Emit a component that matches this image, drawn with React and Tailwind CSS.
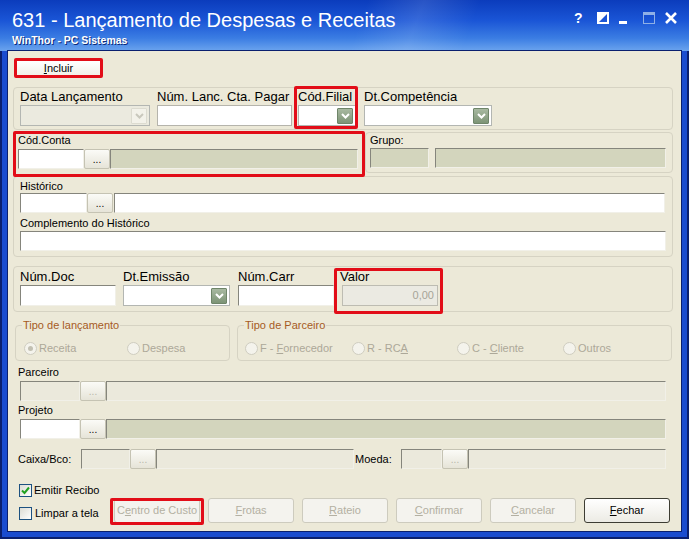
import React from 'react';

const sunkenBorder = 'border border-t-[#85857c] border-l-[#85857c] border-b-[#f1f0e8] border-r-[#f1f0e8]';

const Combo = ({ w, disabled }) => (
    <div className={`${w} h-[21px] flex items-center justify-end pr-[2px] border border-[#b3b6b2] ${disabled ? 'bg-[#ebeadf]' : 'bg-white'}`}>
        <div className={`w-[16px] h-[16px] flex items-center justify-center rounded-[1px] ${disabled ? 'bg-[#f3f2ea] border border-[#dcdbd0]' : 'bg-[linear-gradient(180deg,#a8b9a1,#7d9476)] border border-[#6f8569]'}`}>
            <svg width="9" height="6" viewBox="0 0 9 6">
                <path d="M1 1 L4.5 4.5 L8 1" stroke={disabled ? '#c9c8bd' : '#ffffff'} strokeWidth="2" fill="none" />
            </svg>
        </div>
    </div>
);

const Dots = ({ disabled }) => (
    <div className={`w-[26px] h-full flex items-end justify-center pb-[3px] border border-[#c5c3b3] rounded-[2px] bg-[linear-gradient(180deg,#fbfbf7,#e6e4d8)] text-[10px] leading-none ${disabled ? 'text-[#b8b6aa]' : 'text-black'}`}>...</div>
);

const Radio = ({ label, checked, w }) => (
    <div className={`${w} flex items-center`}>
        <div className="w-[13px] h-[13px] rounded-full border border-[#cfcdc0] bg-[#f4f3ec] flex items-center justify-center">
            {checked && <div className="w-[5px] h-[5px] rounded-full bg-[#c2c0b2]" />}
        </div>
        <span className="ml-[2px] text-[11px] text-[#aca899]">{label}</span>
    </div>
);

const Button = ({ children, enabled }) => (
    <div className={`w-[86px] h-[25px] flex items-center justify-center rounded-[3px] text-[11px] ${enabled ? 'border border-[#3d3d33] bg-[linear-gradient(180deg,#ffffff,#ecebe4)] text-black' : 'border border-[#cdcbbe] bg-[#f4f3ee] text-[#b3b0a2]'}`}>
        {children}
    </div>
);

const RedBox = ({ className }) => (
    <div className={`absolute border-[3px] border-[#e20d18] rounded-[2px] pointer-events-none ${className}`} />
);

const App = () => {
    return (
        <div className="relative w-[689px] h-[539px] overflow-hidden bg-[#1a4ccf] shadow-[inset_0_0_0_2px_#0a1f6e] font-['Liberation_Sans',Arial,sans-serif] text-black">
            {/* title bar */}
            <div className="h-[51px] flex justify-between bg-[linear-gradient(110deg,transparent_52%,rgba(255,255,255,0.12)_60%,transparent_68%),linear-gradient(180deg,#0b3cbc_0%,#1a55d6_40%,#3b7de3_75%,#6ba4ee_100%)]">
                <div className="pl-[12px] pt-[8px] text-white">
                    <div className="text-[20px] leading-[24px]">631 - Lançamento de Despesas e Receitas</div>
                    <div className="mt-[2px] text-[10.5px] leading-[13px] font-bold [text-shadow:1px_1px_0_#0a2a7a]">WinThor - PC Sistemas</div>
                </div>
                <div className="flex items-start pt-[11px] pr-[11px] text-white">
                    <div className="w-[9px] text-[14px] leading-[14px] font-bold">?</div>
                    <svg className="ml-[14px] mt-[1px]" width="12" height="12" viewBox="0 0 12 12">
                        <rect x="1" y="1" width="10" height="10" fill="none" stroke="#fff" strokeWidth="2" />
                        <polygon points="1,1 11,1 1,11" fill="#fff" />
                    </svg>
                    <div className="ml-[10px] mt-[10px] w-[8px] h-[3px] bg-white" />
                    <svg className="ml-[16px]" width="12" height="13" viewBox="0 0 12 13">
                        <rect x="0.5" y="1.5" width="11" height="11" fill="none" stroke="#8fb0e6" strokeWidth="1" />
                        <rect x="0" y="1" width="12" height="3" fill="#8fb0e6" />
                    </svg>
                    <svg className="ml-[9px]" width="14" height="14" viewBox="0 0 14 14">
                        <path d="M2 2 L12 12 M12 2 L2 12" stroke="#fff" strokeWidth="2.6" />
                    </svg>
                </div>
            </div>

            {/* client area */}
            <div className="mx-[8px] h-[480px] bg-[#ece9d8] ring-1 ring-[#0a1f6e] flex flex-col">
                <div className="ml-[9px] mt-[10px] w-[83px] h-[15px] flex items-center justify-center bg-[linear-gradient(180deg,#ffffff,#f1f0e7)] text-[11px] leading-none">
                    <span><u>I</u>ncluir</span>
                </div>

                {/* group 1 */}
                <div className="mt-[11px] ml-[5px] w-[660px] h-[43px] border border-[#d6d3c3] rounded-[4px] flex pl-[6px]">
                    <div className="w-[130px]">
                        <div className="text-[13px] leading-[17px]">Data Lançamento</div>
                        <Combo w="w-[130px]" disabled />
                    </div>
                    <div className="ml-[7px] w-[135px]">
                        <div className="text-[13px] leading-[17px] whitespace-nowrap">Núm. Lanc. Cta. Pagar</div>
                        <div className="h-[21px] border border-[#b5b4ac] bg-white" />
                    </div>
                    <div className="ml-[6px] w-[58px]">
                        <div className="text-[13px] leading-[17px]">Cód.Filial</div>
                        <Combo w="w-[58px]" />
                    </div>
                    <div className="ml-[8px] w-[128px]">
                        <div className="text-[13px] leading-[17px] whitespace-nowrap">Dt.Competência</div>
                        <Combo w="w-[128px]" />
                    </div>
                </div>

                {/* row 2 */}
                <div className="mt-[1px] ml-[5px] flex items-start">
                    <div className="w-[351px] h-[45px] border border-[#d6d3c3] rounded-[4px] pl-[4px]">
                        <div className="mt-[1px] text-[11px] leading-[14px]">Cód.Conta</div>
                        <div className="mt-[2px] h-[20px] flex">
                            <div className={`w-[66px] h-full bg-white ${sunkenBorder}`} />
                            <Dots />
                            <div className={`w-[248px] h-full bg-[#d3d5bd] ${sunkenBorder}`} />
                        </div>
                    </div>
                    <div className="ml-[1px] mt-[1px] w-[308px] h-[41px] border border-[#d6d3c3] rounded-[4px] pl-[4px]">
                        <div className="text-[11px] leading-[14px]">Grupo:</div>
                        <div className="mt-[1px] h-[20px] flex">
                            <div className={`w-[59px] h-full bg-[#d3d5bd] ${sunkenBorder}`} />
                            <div className={`ml-[6px] w-[231px] h-full bg-[#d3d5bd] ${sunkenBorder}`} />
                        </div>
                    </div>
                </div>

                {/* histórico */}
                <div className="mt-[0px] ml-[5px] w-[660px] h-[81px] border border-[#d6d3c3] rounded-[4px] pl-[6px]">
                    <div className="mt-[2px] text-[11px] leading-[14px]">Histórico</div>
                    <div className="h-[20px] flex">
                        <div className={`w-[67px] h-full bg-white ${sunkenBorder}`} />
                        <Dots />
                        <div className={`ml-[1px] w-[551px] h-full bg-white ${sunkenBorder}`} />
                    </div>
                    <div className="mt-[3px] text-[11px] leading-[14px]">Complemento do Histórico</div>
                    <div className={`mt-[1px] w-[646px] h-[20px] bg-white ${sunkenBorder}`} />
                </div>

                {/* group 4 */}
                <div className="mt-[9px] ml-[5px] w-[660px] h-[46px] border border-[#d6d3c3] rounded-[4px] flex pl-[6px]">
                    <div className="w-[96px]">
                        <div className="mt-[1px] text-[13px] leading-[17px]">Núm.Doc</div>
                        <div className={`h-[21px] bg-white ${sunkenBorder}`} />
                    </div>
                    <div className="ml-[7px] w-[107px]">
                        <div className="mt-[1px] text-[13px] leading-[17px]">Dt.Emissão</div>
                        <Combo w="w-[107px]" />
                    </div>
                    <div className="ml-[8px] w-[96px]">
                        <div className="mt-[1px] text-[13px] leading-[17px]">Núm.Carr</div>
                        <div className={`h-[21px] bg-white ${sunkenBorder}`} />
                    </div>
                    <div className="ml-[8px] w-[96px]">
                        <div className="mt-[1px] -ml-[2px] text-[13px] leading-[17px]">Valor</div>
                        <div className="h-[21px] border border-[#bdbcb2] bg-[#ebeae2] flex items-center justify-end pr-[3px] text-[11px] text-[#a6a498]">0,00</div>
                    </div>
                </div>

                {/* tipo */}
                <div className="mt-[7px] flex">
                    <fieldset className="ml-[7px] w-[215px] h-[42px] border border-[#d6d3c3] rounded-[4px]">
                        <legend className="ml-[6px] px-[1px] text-[11px] leading-[13px] text-[#a65b1f]">Tipo de lançamento</legend>
                        <div className="mt-[9px] h-[14px] pl-[8px] flex">
                            <Radio w="w-[103px]" label="Receita" checked />
                            <Radio w="w-[100px]" label="Despesa" />
                        </div>
                    </fieldset>
                    <fieldset className="ml-[7px] w-[435px] h-[42px] border border-[#d6d3c3] rounded-[4px]">
                        <legend className="ml-[6px] px-[1px] text-[11px] leading-[13px] text-[#a65b1f]">Tipo de Parceiro</legend>
                        <div className="mt-[9px] h-[14px] pl-[7px] flex">
                            <Radio w="w-[107px]" label={<span>F - <u>F</u>ornecedor</span>} />
                            <Radio w="w-[105px]" label={<span>R - RC<u>A</u></span>} />
                            <Radio w="w-[106px]" label={<span>C - <u>C</u>liente</span>} />
                            <Radio w="w-[100px]" label="Outros" />
                        </div>
                    </fieldset>
                </div>

                {/* parceiro / projeto / caixa */}
                <div className="pl-[10px]">
                    <div className="mt-[4px] text-[11px] leading-[14px]">Parceiro</div>
                    <div className="mt-[2px] ml-[2px] h-[20px] flex">
                        <div className={`w-[60px] h-full bg-[#ebe9dc] ${sunkenBorder}`} />
                        <Dots disabled />
                        <div className={`w-[560px] h-full bg-[#ebe9dc] ${sunkenBorder}`} />
                    </div>
                    <div className="mt-[2px] text-[11px] leading-[14px]">Projeto</div>
                    <div className="mt-[2px] ml-[2px] h-[20px] flex">
                        <div className={`w-[60px] h-full bg-white ${sunkenBorder}`} />
                        <Dots />
                        <div className={`w-[560px] h-full bg-[#d3d5bd] ${sunkenBorder}`} />
                    </div>
                    <div className="mt-[10px] h-[20px] flex items-center">
                        <div className="w-[63px] text-[11px]">Caixa/Bco:</div>
                        <div className="h-full flex">
                            <div className={`w-[49px] h-full bg-[#ebe9dc] ${sunkenBorder}`} />
                            <Dots disabled />
                            <div className={`w-[198px] h-full bg-[#ebe9dc] ${sunkenBorder}`} />
                        </div>
                        <div className="w-[47px] pl-[1px] text-[11px]">Moeda:</div>
                        <div className="h-full flex">
                            <div className={`w-[41px] h-full bg-[#ebe9dc] ${sunkenBorder}`} />
                            <Dots disabled />
                            <div className={`w-[198px] h-full bg-[#ebe9dc] ${sunkenBorder}`} />
                        </div>
                    </div>

                    {/* bottom */}
                    <div className="mt-[14px] flex">
                        <div className="w-[96px] pl-[1px]">
                            <div className="h-[14px] flex items-center">
                                <div className="w-[13px] h-[13px] border border-[#1c5180] bg-[linear-gradient(135deg,#dcdcd4,#ffffff)] flex items-center justify-center">
                                    <svg width="9" height="9" viewBox="0 0 9 9">
                                        <path d="M1 4.5 L3.5 7 L8 1.5" stroke="#21a121" strokeWidth="2" fill="none" />
                                    </svg>
                                </div>
                                <span className="ml-[2px] text-[11px]">Emitir Recibo</span>
                            </div>
                            <div className="mt-[9px] h-[14px] flex items-center">
                                <div className="w-[13px] h-[13px] border border-[#1c5180] bg-[linear-gradient(135deg,#dcdcd4,#ffffff)]" />
                                <span className="ml-[3px] text-[11px]">Limpar a tela</span>
                            </div>
                        </div>
                        <div className="mt-[15px] flex gap-[8px]">
                            <Button><span>C<u>e</u>ntro de Custo</span></Button>
                            <Button><span><u>F</u>rotas</span></Button>
                            <Button><span><u>R</u>ateio</span></Button>
                            <Button><span><u>C</u>onfirmar</span></Button>
                            <Button><span><u>C</u>ancelar</span></Button>
                            <Button enabled><span><u>F</u>echar</span></Button>
                        </div>
                    </div>
                </div>
            </div>

            {/* highlight boxes */}
            <RedBox className="left-[14px] top-[58px] w-[89px] h-[20px]" />
            <RedBox className="left-[294px] top-[86px] w-[64px] h-[43px]" />
            <RedBox className="left-[13px] top-[131px] w-[352px] h-[46px]" />
            <RedBox className="left-[334px] top-[268px] w-[109px] h-[46px]" />
            <RedBox className="left-[110px] top-[498px] w-[94px] h-[27px]" />
        </div>
    );
};

export default App;
